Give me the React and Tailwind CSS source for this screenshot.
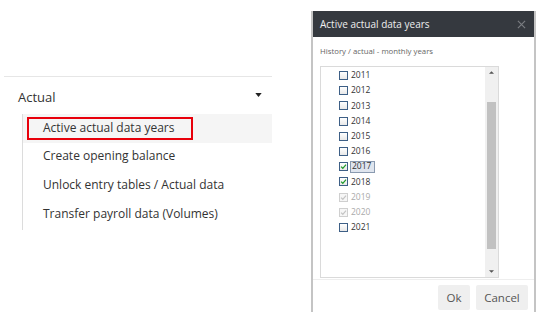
import React from 'react';

const years = [
  { y: '2011', state: 'off' },
  { y: '2012', state: 'off' },
  { y: '2013', state: 'off' },
  { y: '2014', state: 'off' },
  { y: '2015', state: 'off' },
  { y: '2016', state: 'off' },
  { y: '2017', state: 'on', focus: true },
  { y: '2018', state: 'on' },
  { y: '2019', state: 'disabled' },
  { y: '2020', state: 'disabled' },
  { y: '2021', state: 'off' },
];

const Check = ({ color }) => (
  <svg viewBox="0 0 10 10" className="w-[7px] h-[7px]">
    <path d="M1.5 5.2 L4 7.6 L8.6 2.4" fill="none" stroke={color} strokeWidth="1.8" />
  </svg>
);

const YearRow = ({ y, state, focus }) => {
  const disabled = state === 'disabled';
  return (
    <div className="h-[15.2px] flex items-center pl-[18px]">
      <span
        className={
          disabled
            ? 'w-[9px] h-[9px] border border-[#cfcfcf] bg-[#f6f6f6] flex items-center justify-center'
            : 'w-[9px] h-[9px] border border-[#3d5f86] bg-gradient-to-b from-white to-[#e8e8e8] flex items-center justify-center'
        }
      >
        {state === 'on' && <Check color="#1f9a2a" />}
        {disabled && <Check color="#c4c4c4" />}
      </span>
      <span
        className={
          focus
            ? 'ml-[2px] px-[1px] h-[12px] w-[25px] flex items-center border border-[#8a9ab0] bg-[#dfe5ee] text-[8.5px] text-[#333]'
            : disabled
            ? 'ml-[3px] text-[8.5px] text-[#aaa]'
            : 'ml-[3px] text-[8.5px] text-[#333]'
        }
      >
        {y}
      </span>
    </div>
  );
};

export default function App() {
  return (
    <div className="w-[549px] h-[317px] bg-white flex overflow-hidden" style={{ fontFamily: '"Open Sans", "Noto Sans", sans-serif' }}>
      {/* Side menu */}
      <div className="ml-[4px] w-[268px] pt-[76px]">
        <div className="border-t border-[#e6e6e6]">
          <div className="h-[37px] flex items-center justify-between pl-[14px] pr-[10px]">
            <span className="text-[13px] text-[#333] pt-[4px]">Actual</span>
            <svg viewBox="0 0 8 5" className="w-[7px] h-[4px] mb-[1px]">
              <path d="M0 0 H8 L4 5 Z" fill="#222" />
            </svg>
          </div>
          <div className="ml-[18px] border-l border-[#dcdcdc] text-[12px] text-[#333]">
            <div className="h-[29px] bg-[#f5f5f5] pl-[4px] flex items-center">
              <div className="w-[166px] h-[23px] border-2 border-[#e8000b] pl-[14px] pb-[2px] flex items-center">
                Active actual data years
              </div>
            </div>
            <div className="h-[29px] pl-[20px] pb-[3px] flex items-center">Create opening balance</div>
            <div className="h-[29px] pl-[20px] pb-[3px] flex items-center">Unlock entry tables / Actual data</div>
            <div className="h-[29px] pl-[20px] pb-[3px] flex items-center">Transfer payroll data (Volumes)</div>
          </div>
        </div>
      </div>

      {/* Dialog */}
      <div className="ml-[39px] mt-[11px] w-[225px] h-[301px] border-x-2 border-[#c4c4c4] bg-white flex flex-col">
        <div className="h-[26px] bg-[#35393f] flex items-center justify-between pl-[7px] pr-[8px]">
          <span className="text-[10px] text-[#eeeeee]">Active actual data years</span>
          <svg viewBox="0 0 10 10" className="w-[9px] h-[9px]">
            <path d="M1 1 L9 9 M9 1 L1 9" stroke="#7a7d82" strokeWidth="1.3" />
          </svg>
        </div>
        <div className="pl-[7px] pt-[9px] text-[7.8px] text-[#666] h-[29px]">History / actual - monthly years</div>
        <div className="ml-[7px] w-[179px] h-[212px] border border-[#dadada] flex">
          <div className="flex-1 pt-[1px]">
            {years.map((r) => (
              <YearRow key={r.y} {...r} />
            ))}
          </div>
          <div className="w-[13px] bg-[#f0f0f0] flex flex-col items-center">
            <div className="h-[11px] flex items-center justify-center">
              <svg viewBox="0 0 6 3" className="w-[5px] h-[3px]"><path d="M0 3 H6 L3 0 Z" fill="#555" /></svg>
            </div>
            <div className="h-[24px]" />
            <div className="w-[9px] h-[147px] bg-[#c1c1c1]" />
            <div className="flex-1" />
            <div className="h-[11px] flex items-center justify-center">
              <svg viewBox="0 0 6 3" className="w-[5px] h-[3px]"><path d="M0 0 H6 L3 3 Z" fill="#555" /></svg>
            </div>
          </div>
        </div>
        <div className="border-t border-[#eeeeee] mt-[1px] flex justify-end gap-[6px] pr-[6px] pt-[5px]">
          <button className="w-[32px] h-[25px] bg-[#efefef] rounded-[2px] text-[11.5px] text-[#555]">Ok</button>
          <button className="w-[52px] h-[25px] bg-[#efefef] rounded-[2px] text-[11.5px] text-[#555]">Cancel</button>
        </div>
      </div>
    </div>
  );
}
